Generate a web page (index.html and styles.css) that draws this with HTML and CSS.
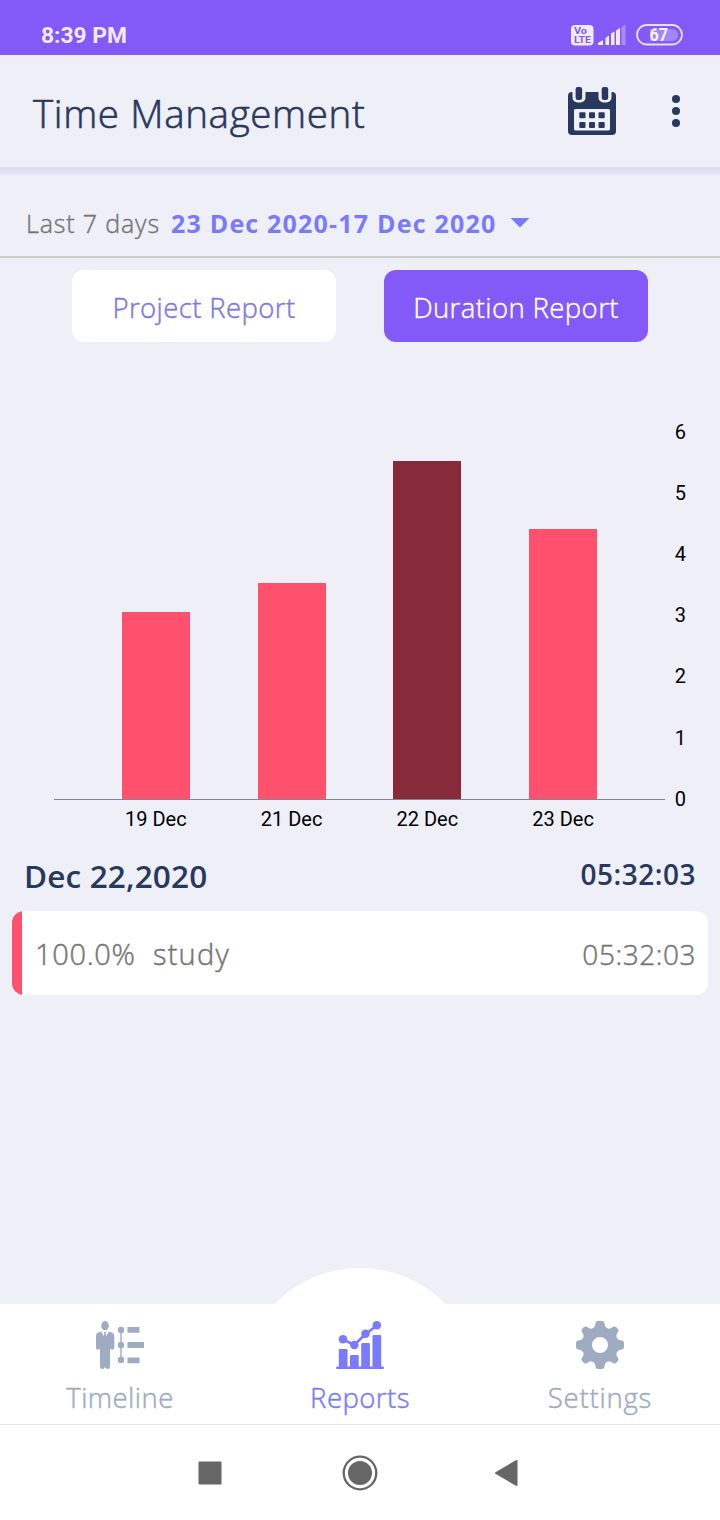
FILE: index.html
```html
<!DOCTYPE html>
<html lang="en">
<head>
<meta charset="utf-8">
<title>Time Management</title>
<link rel="stylesheet" href="styles.css">
</head>
<body>
<div class="screen">
  <div class="status">
    <span class="clock">8:39 PM</span>
    <svg class="status-icons" width="114" height="24" viewBox="570 23 114 24">
      <rect x="571" y="25" width="22.500" height="20.500" rx="4" fill="#f1eafd"/>
      <text class="volte" x="574" y="33.800" textLength="13" lengthAdjust="spacingAndGlyphs">Vo</text>
      <text class="volte" x="574" y="43.400" textLength="17" lengthAdjust="spacingAndGlyphs">LTE</text>
      <g fill="#f1eafd">
        <path d="M598 45v-2l5-3v5zM605.500 45v-7l3.500-2.500v9.500zM611 45v-11.500l3.500-2v13.500zM616 45v-14.500l4-2.500v17z"/>
        <path d="M621.500 45v-18l4-2.500v20.500z" opacity=".35"/>
      </g>
      <path d="M650 29h22a6 6 0 0 1 0 12h-22z" fill="#a686fb"/>
      <rect x="637" y="25" width="45" height="19.500" rx="9.700" fill="none" stroke="#e9defd" stroke-width="1.800"/>
      <text class="battery" x="649.500" y="41.200" textLength="18.500" lengthAdjust="spacingAndGlyphs">67</text>
    </svg>
  </div>

  <header class="appbar">
    <h1 class="title">Time Management</h1>
    <svg class="calendar" width="48" height="49" viewBox="0 0 48 49">
      <rect y="5" width="48" height="43" rx="4" fill="#28385e"/>
      <path d="M4.500 4h13v6.500a5 5 0 0 1-5 5h-3a5 5 0 0 1-5-5zM30.500 4h13v6.500a5 5 0 0 1-5 5h-3a5 5 0 0 1-5-5z" fill="#eeeff7"/>
      <rect x="6" y="22" width="36" height="21.500" rx="1.500" fill="#eeeff7"/>
      <g fill="#28385e">
        <rect x="7.600" width="6.500" height="13" rx="2.200"/><rect x="33.700" width="6.500" height="13" rx="2.200"/>
        <rect x="11.300" y="25.300" width="6.200" height="6" rx="1"/><rect x="21" y="25.300" width="6" height="6" rx="1"/><rect x="30.500" y="25.300" width="6.200" height="6" rx="1"/>
        <rect x="11.300" y="35" width="6.200" height="6" rx="1"/><rect x="21" y="35" width="6" height="6" rx="1"/><rect x="30.500" y="35" width="6.200" height="6" rx="1"/>
      </g>
    </svg>
    <svg class="more" width="8" height="32" viewBox="0 0 8 32" fill="#28385e"><circle cx="4" cy="4" r="4"/><circle cx="4" cy="16" r="4"/><circle cx="4" cy="28" r="4"/></svg>
  </header>

  <div class="range">
    <span class="range-label">Last 7 days</span>
    <span class="range-dates">23 Dec 2020-17 Dec 2020</span>
    <span class="caret"></span>
  </div>

  <div class="tabs">
    <div class="tab">Project Report</div>
    <div class="tab active">Duration Report</div>
  </div>

  <section class="chart">
    <div class="plot">
      <div class="bars">
        <div class="bar" style="height:187.500px"></div>
        <div class="bar" style="height:216.200px"></div>
        <div class="bar selected" style="height:338.500px"></div>
        <div class="bar" style="height:270px"></div>
      </div>
      <div class="days"><span>19 Dec</span><span>21 Dec</span><span>22 Dec</span><span>23 Dec</span></div>
    </div>
    <div class="axis"><span>6</span><span>5</span><span>4</span><span>3</span><span>2</span><span>1</span><span>0</span></div>
  </section>

  <div class="summary">
    <span class="day">Dec 22,2020</span>
    <span class="total">05:32:03</span>
  </div>
  <div class="entry">
    <span class="percent">100.0%</span>
    <span class="name">study</span>
    <span class="time">05:32:03</span>
  </div>

  <nav class="nav">
    <svg class="bump" width="172" height="37" viewBox="0 0 172 37"><circle cx="86" cy="120" r="120" fill="#fff"/></svg>
    <div class="item">
      <svg width="48" height="48" viewBox="0 0 48 48" fill="#9eabc1">
        <ellipse cx="9" cy="4.700" rx="3.800" ry="4.600"/>
        <path d="M5 10.500L9 17l4-6.500 3.500 1.300q1.800.8 1.800 3V27q0 1.500-1.800 1.500L14 28v17.500q0 2.500-2.400 2.500-1.600 0-2.100-1.500h-1Q8 48 6.400 48 4 48 4 45.500V28l-2.300.5Q0 28.500 0 27V14.800q0-2.200 1.800-3z"/>
        <path d="M8 11h2l-.3 2 .8 3L9 18l-1.500-2 .8-3z"/>
        <path d="M24.300 9h1.400v30h-1.400z"/>
        <circle cx="25" cy="9" r="3.200"/><circle cx="25" cy="24" r="3.200"/><circle cx="25" cy="39" r="3.200"/>
        <path d="M31.500 6h12v5.700h-12zM31.500 21h17v6h-17zM31.500 36.500h12v5.700h-12z"/>
      </svg>
      <span class="n-timeline">Timeline</span>
    </div>
    <div class="item current">
      <svg width="48" height="48" viewBox="0 0 48 48" fill="#7a7aff">
        <path d="M7 18.500L18.300 24 29.500 13 41 4.500" fill="none" stroke="#7a7aff" stroke-width="2.600"/>
        <circle cx="7" cy="18.300" r="4.300"/><circle cx="18.300" cy="24" r="4.300"/><circle cx="29.500" cy="12.800" r="4.300"/><circle cx="40.800" cy="4.300" r="4.300"/>
        <rect x="2.800" y="28" width="8.700" height="19" rx="1.200"/><rect x="14" y="34" width="8.700" height="13" rx="1.200"/><rect x="25.200" y="22" width="8.700" height="25" rx="1.200"/><rect x="36.500" y="14" width="8.700" height="33" rx="1.200"/>
        <rect y="45.500" width="48" height="2.500" rx="1.200"/>
      </svg>
      <span>Reports</span>
    </div>
    <div class="item">
      <svg width="48" height="48" viewBox="0 0 48 48" fill="#9eabc1">
        <path fill-rule="evenodd" d="M22 0h4q2 0 2.400 2l.5 2.500q.5 2 2.500 2.800 2 .8 3.800-.3l2-1.200q1.700-1 3.100.4l1.500 1.500q1.400 1.400.4 3.100l-1.200 2q-1.100 1.800-.3 3.800t2.800 2.500l2.500.5q2 .4 2 2.400v4q0 2-2 2.400l-2.500.5q-2 .5-2.800 2.500t.3 3.800l1.200 2q1 1.700-.4 3.100l-1.500 1.500q-1.400 1.400-3.100.4l-2-1.200q-1.800-1.100-3.800-.3t-2.500 2.800l-.5 2.500Q28 48 26 48h-4q-2 0-2.400-2l-.5-2.500q-.5-2-2.500-2.800t-3.800.3l-2 1.200q-1.700 1-3.100-.4l-1.500-1.500q-1.400-1.400-.4-3.100l1.200-2q1.100-1.800.3-3.800t-2.800-2.500L2 28.400Q0 28 0 26v-4q0-2 2-2.400l2.500-.5q2-.5 2.800-2.500t-.3-3.800l-1.200-2q-1-1.700.4-3.100l1.500-1.500q1.400-1.400 3.100-.4l2 1.200q1.800 1.100 3.800.3t2.500-2.800l.5-2.500Q20 0 22 0zM24 16a8 8 0 1 0 0 16 8 8 0 0 0 0-16z"/>
      </svg>
      <span class="n-settings">Settings</span>
    </div>
  </nav>

  <div class="system">
    <svg width="24" height="24" viewBox="0 0 24 24"><rect x=".5" y=".5" width="23" height="23" rx="1" fill="#666"/></svg>
    <svg class="home" width="36" height="36" viewBox="0 0 36 36"><circle cx="18" cy="18" r="16.300" fill="none" stroke="#666" stroke-width="2.300"/><circle cx="18" cy="18" r="12" fill="#666"/></svg>
    <svg width="24" height="28" viewBox="0 0 24 28"><path d="M2 14L22.500 2v24z" fill="#666" stroke="#666" stroke-width="2" stroke-linejoin="round"/></svg>
  </div>
</div>
</body>
</html>
```
FILE: styles.css
```css
* { box-sizing: border-box; }
body { margin: 0; }
.screen {
  width: 720px; height: 1520px; display: flex; flex-direction: column;
  background: #eeeff7; overflow: hidden;
  font-family: "Open Sans", "Noto Sans", sans-serif; color: #757575; white-space: nowrap;
}
.status {
  height: 55px; flex: none; background: #8359f8; display: flex;
  align-items: flex-start; justify-content: space-between; padding: 23px 36px 0 41px;
}
.clock { padding-top: 1px; font: 700 22.800px/24px Roboto, sans-serif; color: #f1eafd; }
.volte { font: 700 8.700px Roboto, sans-serif; fill: #8359f8; }
.battery { font: 700 18.500px Roboto, sans-serif; fill: #f7f2ff; }
.appbar { height: 112px; flex: none; display: flex; align-items: flex-start; padding: 32px 40px 0 33px; }
.title { margin: 0; width: 535px; font-size: 38.500px; font-weight: 300; letter-spacing: .65px; line-height: 52px; color: #28385e; -webkit-text-stroke: .6px; }
.more { margin: 8px 0 0 56px; }
.range {
  height: 91px; flex: none; display: flex; align-items: center; padding: 22px 26px 0;
  border-bottom: 2px solid #ccc; font-size: 25px; line-height: 34px;
  background: linear-gradient(#dfddf5 0, #e1e0f5 5px, #eeeff7 9px);
}
.range-label { width: 145px; font-weight: 300; letter-spacing: .85px; -webkit-text-stroke: .4px; }
.range-dates { width: 339px; font-weight: 700; letter-spacing: 1.200px; color: #7a7aff; }
.caret { width: 20px; height: 10px; background: #7a7aff; clip-path: polygon(0 0, 100% 0, 50% 100%); }
.tabs { display: flex; justify-content: center; gap: 48px; padding-top: 12px; }
.tab {
  width: 264px; height: 72px; border-radius: 12px; background: #fff; color: #7d7ae0;
  display: flex; align-items: center; justify-content: center; padding-top: 2px;
  font-size: 27.500px; font-weight: 300; letter-spacing: .4px; -webkit-text-stroke: .45px;
}
.tab.active { background: #8359f8; color: #fff; }
.chart { height: 494px; flex: none; display: flex; padding: 77px 34px 0 54px; font: 20px/24px Roboto, sans-serif; color: #000; }
.plot { width: 611px; }
.bars { height: 381px; display: flex; align-items: flex-end; gap: 67.900px; padding: 0 67.900px; border-bottom: 1px solid #858589; }
.bar { width: 67.900px; background: #ff506e; }
.bar.selected { background: #872a3a; }
.days { display: flex; padding: 7px 34px 0; }
.days span { width: 135.800px; text-align: center; }
.axis { width: 21px; padding-top: .6px; display: flex; flex-direction: column; gap: 37.200px; text-align: right; }
.summary { height: 75px; flex: none; display: flex; justify-content: space-between; align-items: flex-start; padding: 18px 24px 0; color: #28385e; line-height: 44px; }
.day { font-size: 31.500px; font-weight: 600; letter-spacing: .15px; }
.total { font-size: 28px; font-weight: 600; line-height: 40px; letter-spacing: .5px; }
.entry {
  height: 84px; flex: none; margin: 0 12px; border-radius: 12px;
  background: linear-gradient(90deg, #ff506e 10px, #fff 10px);
  display: flex; align-items: center; padding: 2px 12px 0 23px;
  font-size: 29px; font-weight: 300; line-height: 40px; letter-spacing: .7px; -webkit-text-stroke: .45px;
}
.percent { width: 118px; }
.name { letter-spacing: 1.200px; }
.time { margin-left: auto; font-size: 28px; letter-spacing: .55px; }
.nav { position: relative; height: 120px; flex: none; margin-top: auto; display: flex; background: #fff; color: #9eabc1; }
.bump { position: absolute; left: 274px; top: -36px; }
.item { position: relative; width: 240px; padding-top: 17px; display: flex; flex-direction: column; align-items: center; gap: 9px; font-size: 27.500px; font-weight: 300; line-height: 40px; letter-spacing: .45px; -webkit-text-stroke: .45px; }
.n-settings { letter-spacing: .8px; }
.item.current { color: #7a7aff; }
.system { height: 96px; flex: none; display: flex; align-items: center; justify-content: center; gap: 118px; border-top: 1px solid #e2e2e2; background: #fff; padding: 0 4px 0 0; }
.home { margin: 0 -1.500px 0 1.500px; }
```
